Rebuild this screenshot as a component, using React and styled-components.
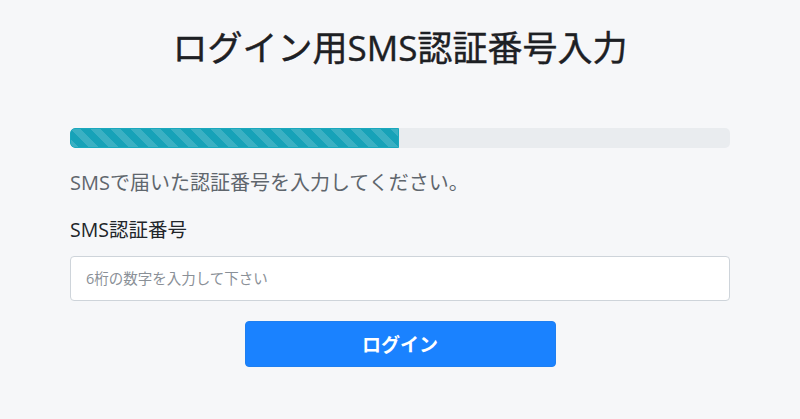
import React from "react";
import styled, { createGlobalStyle } from "styled-components";

const GlobalStyle = createGlobalStyle`
  html, body {
    margin: 0;
    padding: 0;
    background: #f6f7f9;
  }
  body {
    font-family: "Open Sans", "Noto Sans CJK JP", sans-serif;
    color: #212529;
  }
`;

const Page = styled.div`
  width: 660px;
  margin: 0 auto;
  padding-top: 25px;
`;

const Title = styled.h1`
  margin: 0 0 57px;
  text-align: center;
  font-size: 35px;
  font-weight: 400;
  line-height: 46px;
  color: #1d2024;
  -webkit-text-stroke: 0.4px #1d2024;
`;

const Progress = styled.div`
  height: 20px;
  background: #e9ecef;
  border-radius: 5px;
  overflow: hidden;
  display: flex;
`;

const Bar = styled.div`
  background-color: #17a2b8;
  border: 1px solid #1aa8bd;
  box-sizing: border-box;
  border-radius: 5px 0 0 5px;
  background-image: linear-gradient(
    45deg,
    rgba(255, 255, 255, 0.15) 25%,
    transparent 25%,
    transparent 50%,
    rgba(255, 255, 255, 0.15) 50%,
    rgba(255, 255, 255, 0.15) 75%,
    transparent 75%,
    transparent
  );
  background-size: 20px 20px;
`;

const Lead = styled.p`
  margin: 20px 0 0;
  font-size: 20px;
  line-height: 30px;
  color: #5f666d;
`;

const Label = styled.label`
  display: block;
  margin-top: 17px;
  font-size: 19.5px;
  line-height: 30px;
  color: #212529;
`;

const Input = styled.input`
  display: block;
  box-sizing: border-box;
  width: 100%;
  height: 45px;
  margin-top: 11px;
  padding: 0 15px;
  font-family: "Open Sans", "Noto Sans CJK JP", sans-serif;
  font-size: 14.5px;
  border: 1px solid #ced4da;
  border-radius: 4px;
  background: #fff;
  &::placeholder {
    color: #8a9097;
  }
`;

const Button = styled.button`
  display: block;
  margin: 20px auto 0;
  width: 311px;
  height: 46px;
  border: 1px solid #1f7ff0;
  border-radius: 4px;
  background: #1a82ff;
  color: #fff;
  font-family: "Open Sans", "Noto Sans CJK JP", sans-serif;
  font-size: 19px;
  font-weight: 700;
`;

export default function App() {
  const progress = 49.8;
  return (
    <>
      <GlobalStyle />
      <Page>
        <Title>ログイン用SMS認証番号入力</Title>
        <Progress>
          <Bar style={{ width: `${progress}%` }} />
        </Progress>
        <Lead>SMSで届いた認証番号を入力してください。</Lead>
        <Label htmlFor="sms">SMS認証番号</Label>
        <Input id="sms" placeholder="6桁の数字を入力して下さい" />
        <Button>ログイン</Button>
      </Page>
    </>
  );
}
